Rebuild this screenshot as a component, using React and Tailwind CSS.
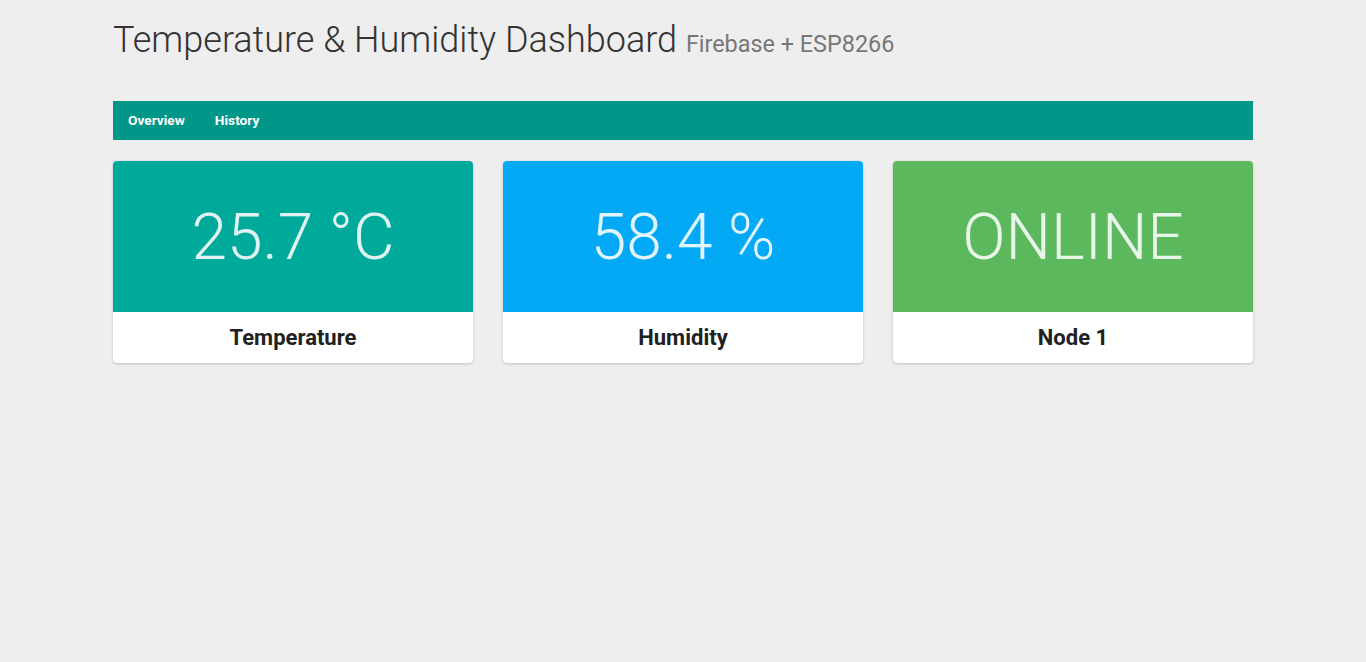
export default function App() {
  const cards = [
    { value: "25.7 °C", label: "Temperature", bg: "bg-[#00aa9a]", fg: "text-[#e0f2f1]" },
    { value: "58.4 %", label: "Humidity", bg: "bg-[#03a9f4]", fg: "text-[#e1f5fe]" },
    { value: "ONLINE", label: "Node 1", bg: "bg-[#5cb85c]", fg: "text-[#e8f5e9]" },
  ];
  return (
    <div className="min-h-[662px] bg-[#eeeeee] font-['Roboto',sans-serif]">
      <div className="mx-auto w-[1140px]">
        <h1 className="pt-[16px] pb-[0px] text-[36px] font-light leading-[48px] text-[#333333]">
          Temperature &amp; Humidity Dashboard{" "}
          <span className="text-[23.4px] font-normal text-[#777777]">Firebase + ESP8266</span>
        </h1>
        <nav className="mt-[33px] flex h-[39px] items-center bg-[#009688] pl-[15px]">
          <span className="text-[13.7px] font-bold text-white">Overview</span>
          <span className="ml-[30px] text-[13.7px] font-bold text-white">History</span>
        </nav>
        <div className="mt-[21px] grid grid-cols-3 gap-[30px]">
          {cards.map((c) => (
            <div key={c.label} className="overflow-hidden rounded-[4px] bg-white shadow-[0_1px_3px_rgba(0,0,0,0.2)]">
              <div className={`flex h-[151px] items-center justify-center pt-[2px] ${c.bg}`}>
                <span className={`text-[64px] font-light ${c.fg}`}>{c.value}</span>
              </div>
              <div className="flex h-[51px] items-center justify-center">
                <span className="text-[22px] font-bold text-[#212121]">{c.label}</span>
              </div>
            </div>
          ))}
        </div>
      </div>
    </div>
  );
}
